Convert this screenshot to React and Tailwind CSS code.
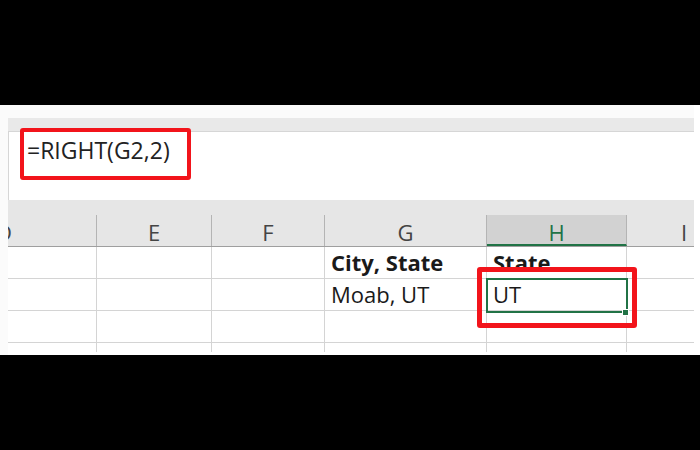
import React from 'react';

const cols = [
  { key: 'D', w: 'w-[89px]' },
  { key: 'E', w: 'w-[115px]' },
  { key: 'F', w: 'w-[113px]' },
  { key: 'G', w: 'w-[162px]' },
  { key: 'H', w: 'w-[140px]' },
  { key: 'I', w: 'w-[67px]' },
];

const rows = [
  { G: 'City, State', H: 'State', bold: true },
  { G: 'Moab, UT', H: 'UT' },
  {},
];

function HeaderCell({ col }) {
  const active = col.key === 'H';
  if (col.key === 'D') {
    return (
      <div className={`${col.w} h-full overflow-hidden border-r border-[#b4b4b4] pt-[2px] leading-[30px] text-[#444]`}>
        <span className="ml-[-12px]">D</span>
      </div>
    );
  }
  if (col.key === 'I') {
    // column I runs past the right edge, so its letter sits right of centre
    return <div className={`${col.w} h-full pl-[54px] pt-[2px] leading-[30px] text-[#444]`}>I</div>;
  }
  return (
    <div
      className={`${col.w} h-full border-r border-[#b4b4b4] pt-[2px] text-center leading-[30px] ${
        active ? 'bg-[#d2d2d2] text-[#217346] border-b-2 border-b-[#217346]' : 'text-[#444]'
      }`}
    >
      {col.key}
    </div>
  );
}

export default function App() {
  return (
    <div className="flex h-[450px] w-[700px] flex-col bg-black font-['Open_Sans',sans-serif] text-[22px]">
      <div className="h-[105px] shrink-0" />

      <div className="relative flex h-[250px] shrink-0 bg-white">
        <div className="w-[8px] shrink-0 bg-[#fbfbfb]" />

        <div className="flex w-[686px] shrink-0 flex-col">
          <div className="h-[13px] bg-[#fbfbfb]" />
          <div className="h-[14px] border-b border-[#d6d6d6] bg-[#e9e9e9]" />

          {/* formula bar */}
          <div className="h-[68px] border-l border-[#d6d6d6] bg-white pl-[18px] pt-[3px] text-[23px] leading-[30px] text-[#222]">
            =RIGHT(G2,2)
          </div>

          {/* column headers */}
          <div className="flex h-[47px] flex-col justify-end border-b border-[#9f9f9f] bg-[#e6e6e6]">
            <div className="flex h-[31px]">
              {cols.map((c) => (
                <HeaderCell key={c.key} col={c} />
              ))}
            </div>
          </div>

          {rows.map((r, i) => (
            <div key={i} className="flex h-[32px] border-b border-[#d4d4d4]">
              {cols.map((c) => (
                <div
                  key={c.key}
                  className={`${c.w} h-full whitespace-nowrap pl-[6px] leading-[30px] text-[#1a1a1a] ${
                    c.key === 'I' ? '' : 'border-r border-[#d4d4d4]'
                  } ${r.bold ? 'font-bold' : ''}`}
                >
                  {r[c.key] || ''}
                </div>
              ))}
            </div>
          ))}
          <div className="flex h-[9px]">
            {cols.map((c) => (
              <div key={c.key} className={`${c.w} h-full ${c.key === 'I' ? '' : 'border-r border-[#d4d4d4]'}`} />
            ))}
          </div>
        </div>

        <div className="flex-1 bg-white" />

        {/* selected cell H2 */}
        <div className="absolute left-[486px] top-[173px] h-[35px] w-[142px] border-2 border-[#217346]" />
        <div className="absolute left-[622px] top-[204px] h-[7px] w-[7px] border border-white bg-[#217346]" />

        {/* red highlight boxes */}
        <div className="absolute left-[20px] top-[23px] h-[52px] w-[171px] rounded-[3px] border-[4px] border-[#f2141b]" />
        <div className="absolute left-[477px] top-[162px] h-[61px] w-[160px] rounded-[3px] border-[5px] border-[#f2141b]" />
      </div>

      <div className="flex-1" />
    </div>
  );
}
